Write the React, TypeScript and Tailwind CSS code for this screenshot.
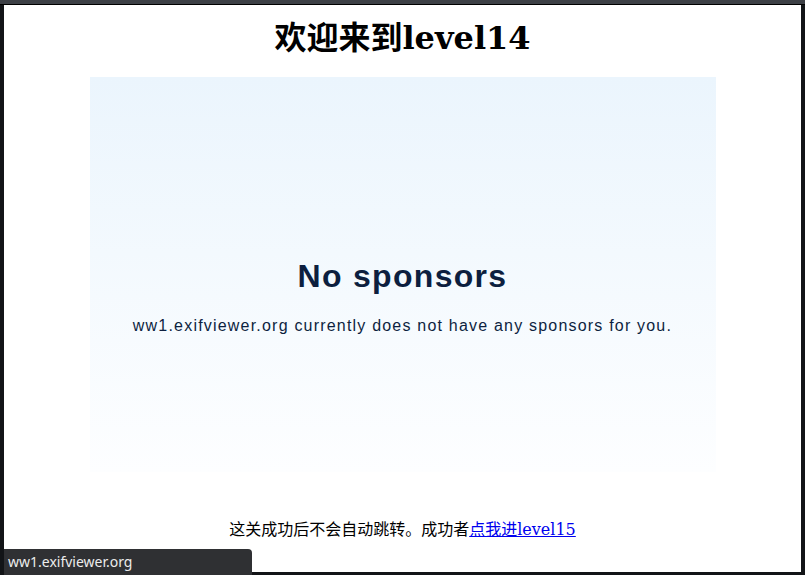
export default function App() {
  return (
    <div className="relative w-[805px] h-[575px] overflow-hidden bg-[#121417] flex flex-col">
      <div className="h-[4px] bg-[#3d4046] shrink-0" />
      <div className="h-[1px] bg-black shrink-0" />
      <div className="flex-1 flex pl-[4px] pr-[4px] pb-[3px]">
        <div
          className="flex-1 bg-white flex flex-col items-center"
          style={{ fontFamily: '"DejaVu Serif", "Noto Sans CJK SC", serif' }}
        >
          <h1 className="mt-[14px] text-[32px] leading-[38px] font-bold text-black">欢迎来到level14</h1>
          <div className="mt-[20px] w-[626px] h-[395px] bg-gradient-to-b from-[#ebf5fd] to-[#fdfeff] flex flex-col items-center pt-[180px]">
            <div
              className="text-[32px] leading-[38px] font-bold tracking-[1.3px] text-[#0d1f3f]"
              style={{ fontFamily: '"Liberation Sans", Arial, sans-serif' }}
            >
              No sponsors
            </div>
            <div
              className="mt-[21px] text-[16px] leading-[20px] tracking-[1.2px] text-[#0d1f3f]"
              style={{ fontFamily: '"Liberation Sans", Arial, sans-serif' }}
            >
              ww1.exifviewer.org currently does not have any sponsors for you.
            </div>
          </div>
          <p className="mt-[46px] text-[16px] leading-[20px] text-black">
            <span style={{ fontFamily: '"Noto Sans CJK SC", sans-serif' }}>这关成功后不会自动跳转。成功者</span>
            <a href="#" className="text-[#0000ee] underline">
              点我进level15
            </a>
          </p>
        </div>
      </div>
      <div
        className="absolute left-[4px] bottom-0 w-[248px] h-[26px] bg-[#2f3033] rounded-tr-[4px] text-[#ececec] text-[14px] leading-[26px] pl-[4px]"
        style={{ fontFamily: '"Noto Sans", "Open Sans", sans-serif' }}
      >
        ww1.exifviewer.org
      </div>
    </div>
  );
}
